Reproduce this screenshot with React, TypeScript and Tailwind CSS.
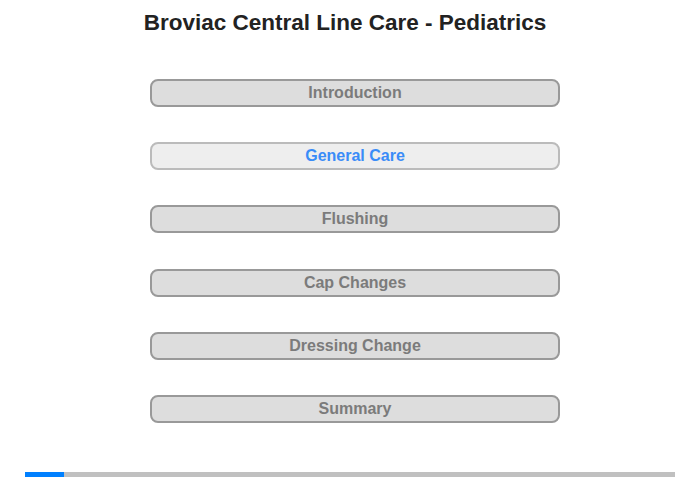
const sections = [
  { label: 'Introduction', active: false },
  { label: 'General Care', active: true },
  { label: 'Flushing', active: false },
  { label: 'Cap Changes', active: false },
  { label: 'Dressing Change', active: false },
  { label: 'Summary', active: false },
];

export default function App() {
  const progress = 6;

  return (
    <div className="w-[700px] h-[480px] bg-white relative" style={{ fontFamily: '"Liberation Sans", Arial, sans-serif' }}>
      <h1 className="pt-[10px] pr-[10px] text-center text-[22.5px] leading-[26px] font-bold text-[#222]">
        Broviac Central Line Care - Pediatrics
      </h1>

      <div className="mt-[43px] ml-[150px] w-[410px] flex flex-col gap-[35.2px]">
        {sections.map((s) => (
          <button
            key={s.label}
            className={
              s.active
                ? 'h-[28px] rounded-[8px] border-2 border-[#bbb] bg-[#eee] text-[16px] font-bold text-[#3a8cf8]'
                : 'h-[28px] rounded-[8px] border-2 border-[#999] bg-[#ddd] text-[16px] font-bold text-[#7b7b7b]'
            }
          >
            {s.label}
          </button>
        ))}
      </div>

      <div className="absolute left-[25px] top-[472px] w-[650px] h-[5px] bg-[#c0c0c0]">
        <div className="h-full bg-[#0080ff]" style={{ width: `${progress}%` }} />
      </div>
    </div>
  );
}
